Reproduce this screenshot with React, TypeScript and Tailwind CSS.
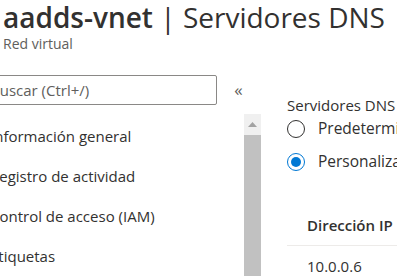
import React from "react";

export default function App() {
  const items = ["Información general", "Registro de actividad", "Control de acceso (IAM)", "Etiquetas", "Diagnosticar y solucionar problemas"];
  return (
    <div className="w-[397px] h-[276px] overflow-hidden bg-white text-[#323130]" style={{ fontFamily: '"Open Sans", "Noto Sans", sans-serif' }}>
      <div className="pl-[3px] pt-[0px]">
        <div className="text-[28px] leading-[34px] whitespace-nowrap">
          <span className="font-semibold">aadds-vnet</span>
          <span className="font-normal"> | Servidores DNS</span>
        </div>
        <div className="text-[14px] leading-[18px] text-[#605e5c] mt-[1px]">Red virtual</div>
      </div>
      <div className="flex mt-[22px]">
        <div className="ml-[-20px] w-[281px] shrink-0 flex flex-col">
          <div className="flex items-center h-[30px]">
            <div className="w-[237px] h-[30px] border border-[#8a8886] rounded-[2px] flex items-center pl-[9px] text-[15px] text-[#605e5c] whitespace-nowrap">
              Buscar (Ctrl+/)
            </div>
            <div className="flex-1 flex justify-center text-[#605e5c] text-[17px] leading-[20px] pr-[1px]">«</div>
          </div>
          <div className="flex mt-[9px]">
            <div className="flex-1 flex flex-col pl-[10px] pt-[2px]">
              {items.map((t) => (
                <div key={t} className="h-[40px] flex items-center text-[15px] whitespace-nowrap">{t}</div>
              ))}
            </div>
            <div className="w-[21px] h-[170px] bg-[#f0f0f0] flex flex-col items-center">
              <div className="h-[21px] flex items-center justify-center">
                <svg width="9" height="5" viewBox="0 0 9 5"><path d="M4.5 0 L9 5 L0 5 Z" fill="#a3a3a3" /></svg>
              </div>
              <div className="w-[17px] flex-1 bg-[#c1c1c1]" />
            </div>
          </div>
        </div>
        <div className="flex-1 pl-[26px] pt-[21px]">
          <div className="text-[15px] leading-[18px] whitespace-nowrap">Servidores DNS</div>
          <div className="flex items-center h-[33px] mt-[-2px] whitespace-nowrap">
            <div className="w-[18px] h-[18px] rounded-full border border-[#323130] shrink-0" />
            <span className="ml-[13px] text-[15.5px]">Predeterminado (proporcionado por Azure)</span>
          </div>
          <div className="flex items-center h-[33px] whitespace-nowrap">
            <div className="w-[18px] h-[18px] rounded-full border border-[#0078d4] shrink-0 flex items-center justify-center">
              <div className="w-[10px] h-[10px] rounded-full bg-[#0078d4]" />
            </div>
            <span className="ml-[13px] text-[15.5px]">Personalizado</span>
          </div>
          <div className="mt-[29px] pl-[20px] h-[36px] flex items-center text-[15px] font-semibold whitespace-nowrap">Dirección IP</div>
          <div className="h-px bg-[#edebe9] mt-[2px]" />
          <div className="pl-[20px] h-[40px] flex items-center text-[15px] whitespace-nowrap">10.0.0.6</div>
        </div>
      </div>
    </div>
  );
}
